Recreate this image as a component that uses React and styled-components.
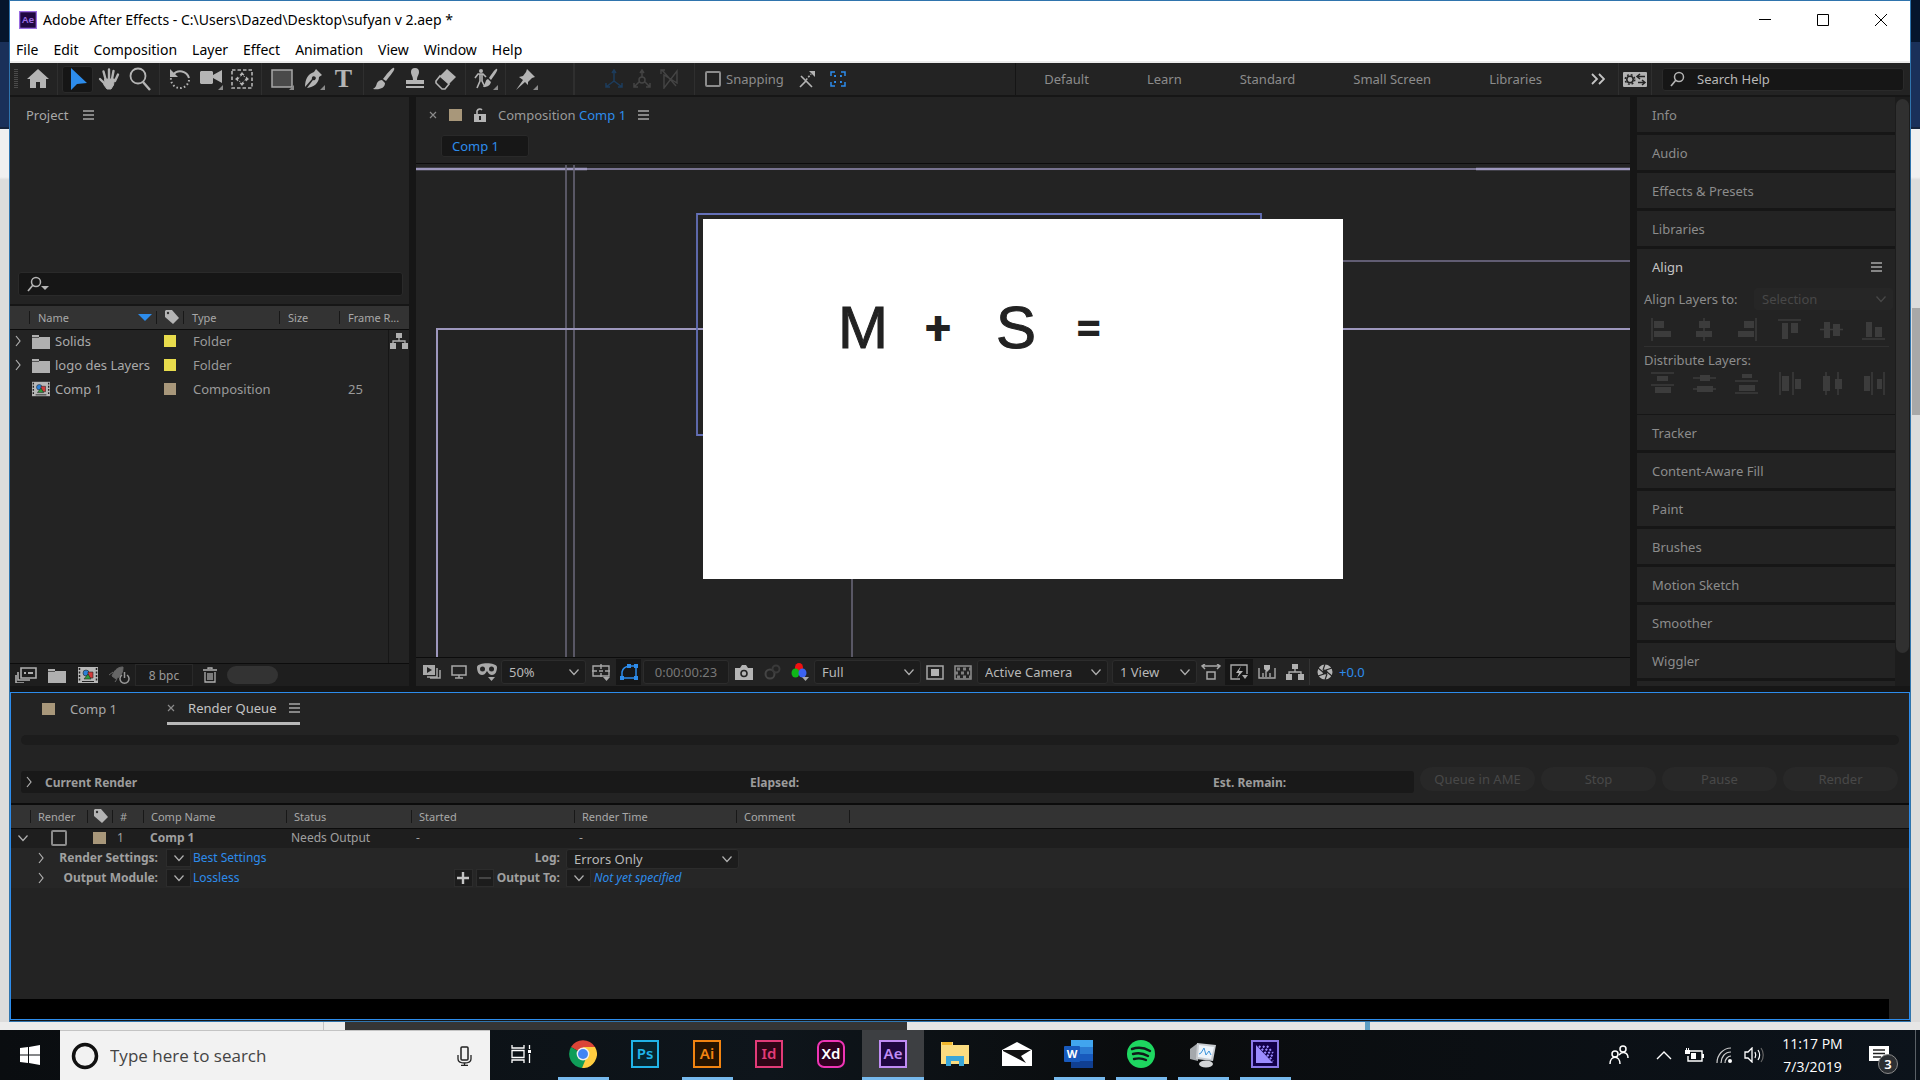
import styled, { createGlobalStyle, css } from 'styled-components';

const BLUE = '#2d8ceb';

const GlobalStyle = createGlobalStyle`
  * {
    box-sizing: border-box;
  }
  body {
    margin: 0;
    background: #e6e6e6;
    font-family: 'Noto Sans', 'Open Sans', sans-serif;
  }
  button,
  input,
  select {
    font: inherit;
    color: inherit;
    margin: 0;
    padding: 0;
    border: none;
    background: none;
  }
  svg {
    display: block;
    flex: none;
  }
`;

/* ---------- icons ---------- */

const Icon = ({ w = 20, h = w, box = `0 0 ${w} ${h}`, children, ...rest }) => (
  <svg width={w} height={h} viewBox={box} fill="none" aria-hidden="true" {...rest}>
    {children}
  </svg>
);

const Corner = () => <path d="M24 18v5h-5z" fill="#8a8a8a" />;

const toolIcons = {
  home: <path d="M12 2 1 12h3v9h6v-6h4v6h6v-9h3z" fill="#b4b4b4" />,
  select: <path d="M5 1v22l6-6 10-1z" fill={BLUE} />,
  hand: (
    <g stroke="#b4b4b4" strokeLinecap="round" strokeWidth="2.4">
      <path d="M8.500 12 6.500 4.500M12 11V2.500M15 12l1.500-8M18 14l3-6.500M8 17l-5-5" />
      <path d="M8 12h9.500l-1 6-2.500 4h-4l-3-4z" fill="#b4b4b4" strokeWidth="1" />
    </g>
  ),
  zoom: (
    <g stroke="#b4b4b4" strokeWidth="1.800">
      <circle cx="10" cy="9" r="7.500" />
      <path d="m15 15 7 8" strokeWidth="2.400" />
    </g>
  ),
  rotate: (
    <g stroke="#b4b4b4" strokeWidth="2">
      <path d="M5 8A9 9 0 0 1 21 11" />
      <path d="M21 13a9 9 0 0 1-18-2" strokeDasharray="1.600 2.200" />
      <path d="M2 2v8h8z" fill="#b4b4b4" stroke="none" />
    </g>
  ),
  camera: (
    <g fill="#b4b4b4">
      <path d="M2 4h11l1 1v3l9-5v13l-9-5v5l-1 1H2l-1-1V5z" />
      <Corner />
    </g>
  ),
  anchor: (
    <g>
      <rect x="2" y="3" width="20" height="18" stroke="#b4b4b4" strokeWidth="1.600" strokeDasharray="3.500 2" />
      <path d="M12 5l2.500 3h-5zM12 19l2.500-3h-5zM5 12l3-2.500v5zM19 12l-3-2.500v5z" fill="#b4b4b4" />
      <circle cx="12" cy="12" r="3.500" stroke="#b4b4b4" strokeWidth="1" strokeDasharray="2 1.500" />
    </g>
  ),
  rect: (
    <g>
      <rect x="2" y="3" width="20" height="17" fill="#4a4a4a" stroke="#a8a8a8" strokeWidth="1.500" />
      <Corner />
    </g>
  ),
  pen: (
    <g>
      <path d="M15 2l6 6-3 2c0 6-5 10-12 11L12 13a2 2 0 1 0-1-1L4 20C4 12 7 7 13 5z" fill="#b4b4b4" />
      <Corner />
    </g>
  ),
  brush: <path d="M22 1c1 1 0 3-8 13l-3-2C18 3 21 0 22 1zM10 13l3 3c0 5-5 7-12 6 3-2 3-3 4-6 1-2 3-3 5-3z" fill="#b4b4b4" />,
  stamp: <path d="M12 1a4 4 0 0 1 4 4c0 3-2 4-2 8h7v4H3v-4h7c0-4-2-5-2-8a4 4 0 0 1 4-4zM3 19h18v2H3z" fill="#b4b4b4" />,
  eraser: (
    <g>
      <path d="m13 2 9 8-7 7-9-8z" fill="#b4b4b4" />
      <path d="m6 9 9 8-4 5H8l-6-6v-2z" stroke="#b4b4b4" strokeWidth="1.600" />
    </g>
  ),
  roto: (
    <g>
      <circle cx="7" cy="4" r="2" fill="#b4b4b4" />
      <path d="M1 11l3-4h5l3 3M6 7v7l-3 7M8 7v7l3 6" stroke="#b4b4b4" strokeWidth="1.600" />
      <path d="M23 2c1 1-1 4-6 11l-2-2C19 5 22 1 23 2zM14 12l3 3c-1 4-4 5-8 5 3-4 2-7 5-8z" fill="#b4b4b4" />
      <Corner />
    </g>
  ),
  pin: (
    <g fill="#b4b4b4">
      <path d="m13 2 8 8-3 1-4 4v3l-3-3-9 8 7-10-4-3 4-1 3-4z" />
      <Corner />
    </g>
  ),
};

const ToolIcon = ({ name }) => (
  <Icon w={24} h={24}>
    {toolIcons[name]}
  </Icon>
);

const Chevron = ({ color = '#b0b0b0', dir = 'down' }) => (
  <Icon w={12} h={12}>
    <path
      d={dir === 'down' ? 'M1.500 3.500 6 8.500l4.500-5' : 'M4 1l4 5-4 5'}
      stroke={color}
      strokeWidth="1.200"
    />
  </Icon>
);

const MenuIcon = () => (
  <Icon w={11} h={10}>
    <path d="M0 1h11M0 5h11M0 9h11" stroke="#a8a8a8" strokeWidth="1.400" />
  </Icon>
);

const CloseIcon = () => (
  <Icon w={8} h={8}>
    <path d="m1 1 6 6M7 1 1 7" stroke="#8a8a8a" strokeWidth="1.200" />
  </Icon>
);

const TagIcon = () => (
  <Icon w={16} h={16}>
    <path d="M1 2 2 1h6l7 8-6 6-8-7z" fill="#b4b4b4" />
    <circle cx="4" cy="4" r="1.200" fill="#333" />
  </Icon>
);

const FolderIcon = () => (
  <Icon w={18} h={15}>
    <path d="M0 1h7v2h11v12H0z" fill="#b0b0b0" />
    <path d="M0 3.500h7" stroke="#555" />
  </Icon>
);

const CompIcon = ({ size = 20 }) => (
  <Icon w={size} h={16} box="0 0 20 16">
    <path d="M0 0h20v16H0z" fill="#b8b8b8" />
    <path d="M1.500 1v14M18.500 1v14" stroke="#222" strokeWidth="1.500" strokeDasharray="2 1.500" />
    <path d="M4 14.500h12" stroke="#222" />
    <circle cx="8" cy="6" r="3" fill="#2c7fd6" stroke="#222" strokeWidth=".6" />
    <path d="M10 5h5v6h-5z" fill="#d23a3a" stroke="#222" strokeWidth=".6" />
    <path d="m10 7 3 5H6z" fill="#2f9b3a" stroke="#222" strokeWidth=".6" />
  </Icon>
);

const FlowIcon = ({ color = '#b0b0b0' }) => (
  <Icon w={18} h={16}>
    <path d="M6 0h6v5H6zM0 10h6v6H0zM12 10h6v6h-6z" fill={color} />
    <path d="M9 5v3M3 10V8h12v2" stroke={color} strokeWidth="1.300" />
  </Icon>
);

const SearchIcon = ({ arrow }) => (
  <Icon w={22} h={16}>
    <circle cx="9" cy="6" r="4.500" stroke="#b4b4b4" strokeWidth="1.500" />
    <path d="m6 9-5 6" stroke="#b4b4b4" strokeWidth="1.700" />
    {arrow && <path d="M14 10h8l-4 4z" fill="#b4b4b4" />}
  </Icon>
);

const AdobeIcon = ({ bg, fg, text, round = 0, size = 28 }) => (
  <Icon w={size} h={size} box="0 0 28 28">
    <rect x="1" y="1" width="26" height="26" rx={round} fill={bg} stroke={fg} strokeWidth="2" />
    <text x="14" y="19" textAnchor="middle" fontSize="15" fontWeight="600" fill={text === 'Xd' ? '#fff' : fg}>
      {text}
    </text>
  </Icon>
);

/* ---------- shared parts ---------- */

const Swatch = styled.span`
  display: block;
  width: ${({ $w }) => $w || 12}px;
  height: 12px;
  background: ${({ $color }) => $color || '#a8977a'};
`;

const Divider = styled.span`
  flex: none;
  width: ${({ $w }) => $w || 1}px;
  margin: 0 4px;
  align-self: stretch;
  background: #2f2f2f;
`;

const SelectWrap = styled.label`
  display: grid;
  align-items: center;
  width: ${({ $width }) => $width}px;
  height: ${({ $height }) => $height || 24}px;
  color: ${({ $color }) => $color || '#b8b8b8'};
  font-size: 13px;
  > select,
  > svg {
    grid-area: 1 / 1;
  }
  > svg {
    justify-self: end;
    margin-right: 6px;
    pointer-events: none;
  }
`;

const SelectBox = styled.select`
  appearance: none;
  width: 100%;
  height: 100%;
  padding-left: 7px;
  border: 1px solid ${({ $flat }) => ($flat ? '#262626' : '#2c2c2c')};
  border-radius: 3px;
  background: ${({ $flat }) => ($flat ? '#262626' : '#1c1c1c')};
  opacity: 1;
`;

const Select = ({ label, value, width, height, color, flat, disabled }) => (
  <SelectWrap $width={width} $height={height} $color={color}>
    <SelectBox $flat={flat} disabled={disabled} aria-label={label} defaultValue={value}>
      <option>{value}</option>
    </SelectBox>
    <Chevron color={color} />
  </SelectWrap>
);

/* ---------- window chrome ---------- */

const Page = styled.div`
  display: flex;
  flex-direction: column;
  min-height: 100vh;
`;

const Desktop = styled.div`
  display: flex;
  flex: 1;
  padding: 0 9px 8px;
  background:
    linear-gradient(90deg, #ececec 323px, #c4c4c4 323px 324px, #ececec 324px 345px, #353535 345px 907px, #e6e6e6 907px 1365px, #5f9fc4 1365px 1370px, #e6e6e6 1370px) bottom / 100% 8px no-repeat,
    linear-gradient(90deg, transparent 99.600%, #a8a8a8 99.600%) 0 308px / 100% 107px no-repeat,
    linear-gradient(#06152c 42px, #1a3059 42px 127px, #16233a 127px 129px, #f0f0f0 129px 177px, #dcdcdc 180px);
`;

const Window = styled.main`
  display: flex;
  flex-direction: column;
  flex: 1;
  min-width: 0;
  padding-bottom: 1px;
  border: 1px solid #2f74ad;
  background: #161616;
`;

const TitleBar = styled.header`
  display: flex;
  align-items: center;
  height: 37px;
  padding-left: 9px;
  gap: 6px;
  background: #fff;
  color: #000;
`;

const Title = styled.h1`
  flex: 1;
  margin: 0;
  font-size: 14px;
  font-weight: 400;
`;

const WindowButtons = styled.div`
  display: flex;
`;

const WindowButton = styled.button`
  display: grid;
  place-items: center;
  width: 58px;
  height: 36px;
`;

const MenuBar = styled.nav`
  display: flex;
  align-items: center;
  gap: 15px;
  height: 25px;
  padding: 0 6px;
  border-bottom: 2px solid #ececec;
  background: #fff;
  color: #000;
  font-size: 14px;
`;

/* ---------- toolbar ---------- */

const ToolBar = styled.div`
  display: flex;
  align-items: center;
  height: 32px;
  padding: 0 6px 0 4px;
  background: #232323;
  color: #8c8c8c;
  font-size: 13px;
`;

const ToolGroup = styled.div`
  display: flex;
  align-items: center;
  align-self: stretch;
  & + & {
    margin-left: 4px;
    padding-left: 4px;
    border-left: 1px solid #2f2f2f;
  }
`;

const Grip = styled.span`
  width: 4px;
  height: 20px;
  margin-right: 4px;
  background: repeating-linear-gradient(#4a4a4a 0 1px, transparent 1px 2px);
`;

const Tool = styled.button`
  display: grid;
  place-items: center;
  width: ${({ $w }) => $w || 31}px;
  height: 27px;
  ${({ $active }) =>
    $active &&
    css`
      border: 1px solid #2a2a2a;
      border-radius: 3px;
      background: #161616;
    `}
`;

const TypeTool = styled(Tool)`
  color: #b4b4b4;
  font-family: 'Liberation Serif', serif;
  font-size: 26px;
  font-weight: 700;
  line-height: 24px;
`;

const AxisGroup = styled.div`
  display: flex;
  align-items: center;
  align-self: stretch;
  margin-left: 28px;
`;

const AxisTools = styled.div`
  display: flex;
  margin: 0 6px 0 21px;
`;

const Snapping = styled.label`
  display: flex;
  align-items: center;
  gap: 5px;
  margin: 0 8px 0 6px;
`;

const Check = styled.input`
  appearance: none;
  display: block;
  width: 16px;
  height: 16px;
  border: 2px solid #8c8c8c;
  border-radius: 2px;
`;

const Workspaces = styled.nav`
  display: flex;
  align-items: center;
  align-self: stretch;
  gap: 49px;
  margin-left: auto;
  padding: 0 9px 0 28px;
  border-left: 1px solid #151515;
`;

const WorkspaceTabs = styled.div`
  display: flex;
  gap: 58px;
`;

const HelpSearch = styled.label`
  display: flex;
  align-items: center;
  gap: 5px;
  width: 242px;
  height: 23px;
  margin-left: 6px;
  padding-left: 7px;
  border: 1px solid #2a2a2a;
  border-radius: 3px;
  background: #161616;
`;

const TextInput = styled.input`
  min-width: 0;
  flex: 1;
  outline: none;
  &::placeholder {
    color: #b8b8b8;
    opacity: 1;
  }
`;

/* ---------- workspace ---------- */

const Workspace = styled.div`
  display: grid;
  grid-template-columns: 399px minmax(0, 1fr) 273px;
  column-gap: 7px;
  flex: 589 1 0;
  min-height: 0;
  padding: 2px 0 6px;
`;

const Panel = styled.section`
  display: flex;
  flex-direction: column;
  min-width: 0;
  background: #232323;
  color: #9a9a9a;
  font-size: 13px;
`;

const PanelTitle = styled.div`
  display: flex;
  align-items: center;
  gap: 15px;
  height: 36px;
  padding-left: 16px;
  color: #a8a8a8;
`;

const Preview = styled.div`
  height: 139px;
`;

const ProjectSearch = styled.label`
  display: flex;
  align-items: center;
  height: 24px;
  margin: 0 6px 8px 8px;
  padding-left: 8px;
  border: 1px solid #2a2a2a;
  border-radius: 3px;
  background: #161616;
`;

const AssetArea = styled.div`
  flex: 1;
  border-top: 2px solid #161616;
  background: linear-gradient(#161616, #161616) 378px 0 / 1px 100% no-repeat;
`;

const AssetTable = styled.table`
  width: 100%;
  table-layout: fixed;
  border-collapse: collapse;
`;

const Th = styled.th`
  height: 23px;
  padding: 0 0 0 ${({ $pad }) => ($pad === undefined ? 8 : $pad)}px;
  border-bottom: 1px solid #0c0c0c;
  background: ${({ $last }) =>
    $last ? '#333' : 'linear-gradient(#181818, #181818) right center / 1px 13px no-repeat #333'};
  color: #a8a8a8;
  font-size: 11px;
  font-weight: 400;
  text-align: left;
  white-space: nowrap;
`;

const HeadCell = styled.span`
  display: flex;
  align-items: center;
  justify-content: space-between;
  padding-right: 5px;
`;

const Td = styled.td`
  height: 24px;
  padding: 0 0 0 ${({ $pad }) => $pad || 0}px;
  white-space: nowrap;
  font-size: 13px;
  line-height: 20px;
`;

const AssetName = styled.span`
  display: flex;
  align-items: center;
  gap: 5px;
  color: #aaa;
`;

const ProjectFooter = styled.footer`
  display: flex;
  align-items: center;
  height: 23px;
  border-top: 1px solid #0c0c0c;
  background: #1e1e1e;
`;

const FootButton = styled.button`
  display: grid;
  place-items: center;
  width: 31px;
  height: 22px;
`;

const DepthButton = styled.button`
  width: 58px;
  height: 22px;
  margin: 0 1px;
  border: 1px solid #292929;
  background: #1c1c1c;
  font-size: 12px;
`;

const ScrollThumb = styled.span`
  width: 51px;
  height: 18px;
  margin-left: 2px;
  border-radius: 9px;
  background: #333;
`;

/* ---------- composition ---------- */

const CompHeader = styled.div`
  display: flex;
  align-items: center;
  height: 36px;
  padding-left: 13px;
  gap: 12px;
  > p {
    margin: 0;
  }
  b {
    color: ${BLUE};
    font-weight: 400;
  }
`;

const CompTabs = styled.div`
  height: 31px;
  padding: 2px 0 0 25px;
  border-bottom: 1px solid #0c0c0c;
`;

const CompTab = styled.button`
  width: 88px;
  height: 22px;
  padding-left: 10px;
  border: 1px solid #292929;
  border-radius: 3px;
  background: #171717;
  color: ${BLUE};
  text-align: left;
`;

const Viewer = styled.div`
  display: flex;
  justify-content: center;
  flex: 1;
  overflow: hidden;
  padding-top: 55px;
  border-bottom: 1px solid #0c0c0c;
`;

const Stage = styled.div`
  position: relative;
  flex: none;
  width: 640px;
  height: 360px;
`;

const Guides = styled.svg`
  position: absolute;
  inset: 0;
  overflow: visible;
`;

const Canvas = styled.div`
  position: relative;
  display: flex;
  align-items: center;
  height: 100%;
  padding: 0 0 142px 135px;
  background: #fff;
  color: #222;
  font-size: 60px;
  line-height: 60px;
`;

const Letter = styled.span`
  width: ${({ $w }) => $w}px;
  font-family: 'Liberation Sans', sans-serif;
  -webkit-text-stroke: 1px #222;
`;

const Sign = styled.span`
  width: ${({ $w }) => $w}px;
  font-family: Roboto, sans-serif;
  font-size: 48px;
  font-weight: 700;
`;

const ViewBar = styled.footer`
  display: flex;
  align-items: center;
  height: 28px;
  padding-left: 2px;
`;

const ViewTool = styled.button`
  display: grid;
  place-items: center;
  width: ${({ $w }) => $w || 28}px;
  height: 26px;
  border-left: ${({ $line }) => ($line ? '1px solid #333' : 'none')};
  background: ${({ $dark }) => ($dark ? '#161616' : 'none')};
`;

const TimeBox = styled.button`
  width: 86px;
  height: 24px;
  margin: 0 1px 0 2px;
  border: 1px solid #2c2c2c;
  border-radius: 3px;
  background: #1c1c1c;
  color: #777;
`;

const ViewGap = styled.span`
  width: 4px;
`;

const Exposure = styled.button`
  color: ${BLUE};
`;

/* ---------- side panels ---------- */

const SideColumn = styled.aside`
  display: flex;
  justify-content: space-between;
  background: #1c1c1c;
  overflow: hidden;
`;

const SideList = styled.div`
  flex: 1;
  background: #232323;
  color: #8c8c8c;
  font-size: 13px;
`;

const SideItem = styled.button`
  display: block;
  width: 100%;
  height: 38px;
  padding: 0 15px;
  border-bottom: 3px solid #161616;
  text-align: left;
`;

const SideScroll = styled.div`
  width: 15px;
  padding: 2px 0 33px 1px;
  > span {
    display: block;
    height: 100%;
    width: 13px;
    border-radius: 7px;
    background: #303030;
  }
`;

const AlignPanel = styled.section`
  height: 166px;
  border-bottom: 1px solid #161616;
`;

const AlignTitle = styled.h2`
  display: flex;
  align-items: center;
  justify-content: space-between;
  height: 36px;
  margin: 0;
  padding: 0 13px 0 15px;
  color: #c4c4c4;
  font-size: 13px;
  font-weight: 400;
`;

const AlignTarget = styled.div`
  display: flex;
  align-items: center;
  justify-content: space-between;
  height: 27px;
  padding: 0 2px 0 7px;
`;

const AlignRow = styled.div`
  display: grid;
  grid-template-columns: repeat(6, 1fr);
  place-items: center;
  height: 34px;
  margin: 0 0 0 4px;
`;

const AlignLabel = styled.div`
  height: 20px;
  margin: 0 6px 0 7px;
  border-top: 1px solid #303030;
  line-height: 26px;
`;

/* ---------- render queue ---------- */

const Queue = styled.section`
  display: flex;
  flex-direction: column;
  flex: 326 1 0;
  border: 1px solid ${BLUE};
  background: #232323;
  color: #a8a8a8;
  font-size: 13px;
`;

const QueueTabs = styled.div`
  display: flex;
  align-items: center;
  height: 32px;
  padding-left: 31px;
  gap: 15px;
`;

const QueueTab = styled.button`
  display: flex;
  align-items: center;
  gap: 13px;
  height: 31px;
  margin-left: 35px;
  border-bottom: 3px solid #b8b8b8;
  color: #c4c4c4;
`;

const Progress = styled.div`
  height: 10px;
  margin: 10px 10px 22px;
  border-radius: 5px;
  background: #1c1c1c;
`;

const RenderStatus = styled.div`
  display: flex;
  align-items: flex-start;
  gap: 6px;
  padding: 0 11px 0 10px;
`;

const StatusBar = styled.div`
  display: grid;
  grid-template-columns: 22px 705px 463px 1fr;
  align-items: center;
  flex: 1;
  height: 22px;
  margin-top: 4px;
  padding-left: 2px;
  border-radius: 3px;
  background: #191919;
  color: #9c9c9c;
  font-size: 12px;
  font-weight: 700;
`;

const PillButton = styled.button`
  width: 115px;
  height: 24px;
  border-radius: 12px;
  background: #282828;
  color: #484848;
`;

const QueueList = styled.div`
  flex: 1;
  margin-top: 10px;
  border-top: 2px solid #0c0c0c;
`;

const QueueTable = styled.table`
  width: 100%;
  table-layout: fixed;
  border-collapse: collapse;
`;

const QueueTd = styled(Td)`
  height: 20px;
  padding-left: ${({ $pad }) => $pad || 4}px;
  background: ${({ $alt }) => ($alt ? '#262626' : '#1e1e1e')};
  color: #a0a0a0;
  font-size: 12px;
  font-weight: ${({ $bold }) => ($bold ? 700 : 400)};
  line-height: 18px;
`;

const Detail = styled.div`
  display: grid;
  grid-template-columns: 34px 112px 34px 256px 112px 1fr;
  align-items: center;
  height: 19px;
`;

const DetailCell = styled.span`
  display: flex;
  align-items: center;
  justify-content: ${({ $end }) => ($end ? 'flex-end' : 'flex-start')};
  gap: 3px;
  padding-left: ${({ $pad }) => $pad || 0}px;
  font-weight: ${({ $bold }) => ($bold ? 700 : 400)};
`;

const MiniButton = styled.button`
  display: grid;
  place-items: center;
  width: ${({ $w }) => $w || 25}px;
  height: 18px;
  border: 1px solid #2c2c2c;
  background: #1c1c1c;
`;

const Link = styled.a`
  color: ${BLUE};
  text-decoration: none;
  font-size: 12px;
  font-style: ${({ $italic }) => ($italic ? 'italic' : 'normal')};
`;

const QueueFooter = styled.div`
  height: 20px;
  margin-right: 20px;
  background: #000;
`;

/* ---------- taskbar ---------- */

const Taskbar = styled.footer`
  display: flex;
  align-items: stretch;
  height: 50px;
  background: linear-gradient(90deg, #0a0d10, #0e151b 40%, #0a0c0d 60%, #0c131b);
  color: #fff;
`;

const Start = styled.button`
  display: grid;
  place-items: center;
  width: 60px;
`;

const TaskSearch = styled.label`
  display: flex;
  align-items: center;
  width: 430px;
  padding: 0 18px 0 11px;
  gap: 11px;
  border-top: 1px solid #c4c4c4;
  background: #f2f2f2;
  color: #3a3a3a;
  > input {
    font-family: 'Open Sans', sans-serif;
    font-size: 17px;
  }
  > input::placeholder {
    color: #444;
  }
`;

const TaskButton = styled.button`
  display: grid;
  place-items: center;
  width: 62px;
  background: ${({ $active }) => ($active ? '#3d3f42' : 'none')};
  box-shadow: ${({ $active }) => ($active ? 'inset 0 -3px #76b9ed' : 'none')};
  padding-bottom: 3px;
  ${({ $open }) =>
    $open &&
    css`
      background: linear-gradient(#76b9ed, #76b9ed) center bottom / 51px 3px no-repeat;
    `}
`;

const Tray = styled.div`
  display: flex;
  align-items: center;
  margin-left: auto;
`;

const TrayButton = styled.button`
  display: grid;
  place-items: center;
  width: ${({ $w }) => $w || 30}px;
  height: 50px;
`;

const Clock = styled.button`
  width: 87px;
  font-family: 'Open Sans', sans-serif;
  font-size: 14px;
  line-height: 23px;
`;

const Notify = styled(TrayButton)`
  position: relative;
  width: 46px;
  margin-right: 13px;
`;

const Badge = styled.span`
  position: absolute;
  right: 4px;
  bottom: 6px;
  width: 20px;
  height: 20px;
  border: 1px solid #8a8a8a;
  border-radius: 50%;
  background: #2c2f33;
  font-size: 13px;
  font-weight: 600;
  line-height: 18px;
`;

const ShowDesktop = styled.button`
  width: 5px;
  border-left: 1px solid #5a6066;
`;

/* ---------- data ---------- */

const menus = ['File', 'Edit', 'Composition', 'Layer', 'Effect', 'Animation', 'View', 'Window', 'Help'];
const toolGroups = [
  ['home'],
  ['select', 'hand', 'zoom'],
  ['rotate', 'camera', 'anchor'],
  ['rect', 'pen', 'type'],
  ['brush', 'stamp', 'eraser'],
  ['roto'],
  ['pin'],
];
const workspaces = ['Default', 'Learn', 'Standard', 'Small Screen', 'Libraries'];
const assets = [
  { name: 'Solids', type: 'Folder', color: '#e8dc4c' },
  { name: 'logo des Layers', type: 'Folder', color: '#e8dc4c' },
  { name: 'Comp 1', type: 'Composition', color: '#a8977a', rate: 25 },
];
const topPanels = ['Info', 'Audio', 'Effects & Presets', 'Libraries'];
const bottomPanels = ['Tracker', 'Content-Aware Fill', 'Paint', 'Brushes', 'Motion Sketch', 'Smoother', 'Wiggler'];

const alignIcons = [
  ['Align left', 'M1 0v23', 'M3 3h10v7H3zM3 13h17v6H3z'],
  ['Align horizontal centers', 'M11 0v23', 'M6 3h11v7H6zM3 13h16v6H3z'],
  ['Align right', 'M21 0v23', 'M9 3h10v7H9zM3 13h16v6H3z'],
  ['Align top', 'M0 2h23', 'M4 5h6v16H4zM13 5h7v10h-7z'],
  ['Align vertical centers', 'M0 11.500h23', 'M4 4h6v16H4zM13 6h7v12h-7z'],
  ['Align bottom', 'M0 21h23', 'M4 4h6v15H4zM13 9h7v10h-7z'],
];
const distributeIcons = [
  ['Distribute tops', 'M0 1h23M0 13h23', 'M6 4h11v5H6zM4 15h16v6H4z'],
  ['Distribute vertical centers', 'M0 6h23M0 17h23', 'M7 3h10v6H7zM4 14h16v6H4z'],
  ['Distribute bottoms', 'M0 9h23M0 21h23', 'M7 2h10v4H7zM4 13h16v6H4z'],
  ['Distribute lefts', 'M2 0v23M15 0v23', 'M4 4h7v15H4zM17 7h6v10h-6z'],
  ['Distribute horizontal centers', 'M6 0v23M18 0v23', 'M3 4h7v15H3zM15 7h7v10h-7z'],
  ['Distribute rights', 'M10 0v23M22 0v23', 'M2 4h6v15H2zM15 7h5v10h-5z'],
];

/* ---------- sections ---------- */

const TopBars = () => (
  <>
    <TitleBar>
      <AdobeIcon bg="#1f0740" fg="#9a6ce0" text="Ae" size={18} />
      <Title>Adobe After Effects - C:\Users\Dazed\Desktop\sufyan v 2.aep *</Title>
      <WindowButtons>
        <WindowButton aria-label="Minimize">
          <Icon w={12}>
            <path d="M0 5.500h12" stroke="#000" />
          </Icon>
        </WindowButton>
        <WindowButton aria-label="Maximize">
          <Icon w={12}>
            <path d="M.5.5h11v11H.5z" stroke="#000" />
          </Icon>
        </WindowButton>
        <WindowButton aria-label="Close">
          <Icon w={12}>
            <path d="m0 0 12 12M12 0 0 12" stroke="#000" />
          </Icon>
        </WindowButton>
      </WindowButtons>
    </TitleBar>
    <MenuBar>
      {menus.map((m) => (
        <button key={m}>{m}</button>
      ))}
    </MenuBar>
  </>
);

const Tools = () => (
  <ToolBar>
    <Grip />
    {toolGroups.map((group) => (
      <ToolGroup key={group[0]}>
        {group.map((name) =>
          name === 'type' ? (
            <TypeTool key={name}>T</TypeTool>
          ) : (
            <Tool key={name} aria-label={name} $active={name === 'select'}>
              <ToolIcon name={name} />
            </Tool>
          )
        )}
      </ToolGroup>
    ))}
    <AxisGroup>
      <Divider $w={2} />
      <AxisTools>
        <Tool $w={28} aria-label="Local axis">
          <Icon w={20}>
            <path d="M10 12V3M10 12l-8 6M10 12l8 6M8 4l2-3 2 3M2 14v4h4M18 14v4h-4" stroke="#1d3c5c" strokeWidth="1.500" />
          </Icon>
        </Tool>
        <Tool $w={28} aria-label="World axis">
          <Icon w={20}>
            <path d="M10 8V3M7 13l-5 5M13 13l5 5M8 4l2-3 2 3M2 14v4h4M18 14v4h-4" stroke="#444" strokeWidth="1.500" />
            <circle cx="10" cy="11" r="3" stroke="#444" strokeWidth="1.500" />
          </Icon>
        </Tool>
        <Tool $w={28} aria-label="View axis">
          <Icon w={20}>
            <path d="M4 6v13L17 2v12zM2 1l14 16M1 5V1h4" stroke="#444" strokeWidth="1.400" />
          </Icon>
        </Tool>
      </AxisTools>
      <Divider />
      <Snapping>
        <Check type="checkbox" />
        Snapping
      </Snapping>
      <Tool aria-label="Snap edges">
        <Icon w={18}>
          <path d="m2 17 6-6 6 6M3 6l5 5" stroke="#b4b4b4" strokeWidth="1.600" strokeDasharray="18 2" />
          <path d="m8 10 5-6" stroke="#b4b4b4" strokeWidth="1.600" strokeDasharray="2 1.500" />
          <path d="M11 1h6v6z" fill="#b4b4b4" />
        </Icon>
      </Tool>
      <Tool aria-label="Snap features">
        <Icon w={16}>
          <path d="M1 5V1h4M11 1h4v4M15 11v4h-4M5 15H1v-4" stroke={BLUE} strokeWidth="1.500" />
          <path d="M5 6V5h1M10 5h1v1M11 10v1h-1M6 11H5v-1" stroke={BLUE} strokeWidth="1.800" />
        </Icon>
      </Tool>
    </AxisGroup>
    <Workspaces>
      <WorkspaceTabs>
        {workspaces.map((w) => (
          <button key={w}>{w}</button>
        ))}
      </WorkspaceTabs>
      <button aria-label="More workspaces">
        <Icon w={14} h={12}>
          <path d="m1 1 5 5-5 5M8 1l5 5-5 5" stroke="#c4c4c4" strokeWidth="1.800" />
        </Icon>
      </button>
    </Workspaces>
    <Divider />
    <button aria-label="Workspace settings">
      <Icon w={24} h={15}>
        <rect width="24" height="15" rx="1" fill="#b4b4b4" />
        <circle cx="7" cy="7.500" r="3.200" stroke="#232323" strokeWidth="1.600" />
        <circle cx="7" cy="7.500" r="4.800" stroke="#232323" strokeWidth="1.400" strokeDasharray="1.900 1.900" />
        <path d="M14 4.500h8M17 2l-3 2.500L17 7M22 10.500h-7M19 8l3 2.500-3 2.500" stroke="#232323" strokeWidth="1.500" />
      </Icon>
    </button>
    <Divider />
    <HelpSearch>
      <SearchIcon />
      <TextInput placeholder="Search Help" aria-label="Search Help" />
    </HelpSearch>
  </ToolBar>
);

const Project = () => (
  <Panel>
    <PanelTitle>
      Project <MenuIcon />
    </PanelTitle>
    <Preview />
    <ProjectSearch>
      <SearchIcon arrow />
      <TextInput aria-label="Search project" />
    </ProjectSearch>
    <AssetArea>
      <AssetTable>
        <colgroup>
          {[20, 127, 27, 96, 60, 49, 20].map((w, i) => (
            <col key={i} width={w} />
          ))}
        </colgroup>
        <thead>
          <tr>
            <Th />
            <Th>
              <HeadCell>
                Name
                <Icon w={14} h={7}>
                  <path d="M0 0h14L7 7z" fill={BLUE} />
                </Icon>
              </HeadCell>
            </Th>
            <Th $pad={7}>
              <TagIcon />
            </Th>
            <Th>Type</Th>
            <Th>Size</Th>
            <Th colSpan={2} $last>
              Frame R...
            </Th>
          </tr>
        </thead>
        <tbody>
          {assets.map((a, i) => (
            <tr key={a.name}>
              <Td $pad={2}>{a.type === 'Folder' && <Chevron dir="right" />}</Td>
              <Td $pad={2}>
                <AssetName>
                  {a.type === 'Folder' ? <FolderIcon /> : <CompIcon size={18} />}
                  {a.name}
                </AssetName>
              </Td>
              <Td $pad={7}>
                <Swatch $color={a.color} />
              </Td>
              <Td $pad={9}>{a.type}</Td>
              <Td />
              <Td $pad={8}>{a.rate}</Td>
              <Td $pad={1}>{i === 0 && <FlowIcon />}</Td>
            </tr>
          ))}
        </tbody>
      </AssetTable>
    </AssetArea>
    <ProjectFooter>
      <FootButton aria-label="Interpret footage">
        <Icon w={22} h={16}>
          <path d="M6 1h15v10H6zM3 5v8h12M1 8v8h8" stroke="#b0b0b0" strokeWidth="1.600" />
          <path d="M9 6h2M13 6h5" stroke="#b0b0b0" strokeWidth="2" />
        </Icon>
      </FootButton>
      <FootButton aria-label="New folder">
        <FolderIcon />
      </FootButton>
      <FootButton aria-label="New composition">
        <CompIcon size={22} />
      </FootButton>
      <FootButton aria-label="GPU acceleration">
        <Icon w={22} h={18}>
          <path d="M15 1c-6 0-9 4-11 9l4 3c5-3 7-6 7-12zM1 9l4-3M7 16l2-3" fill="#666" stroke="#666" />
          <path d="M14 9a4.500 4.500 0 1 0 5 0M16.500 6v6" stroke="#999" strokeWidth="1.500" />
        </Icon>
      </FootButton>
      <DepthButton>8 bpc</DepthButton>
      <FootButton aria-label="Delete">
        <Icon w={14} h={16}>
          <path d="M0 3h14M5 2V1h4v1M2 5v10h10V5M5 6v7M7 6v7M9 6v7" stroke="#b0b0b0" strokeWidth="1.300" />
        </Icon>
      </FootButton>
      <ScrollThumb />
    </ProjectFooter>
  </Panel>
);

const Composition = () => (
  <Panel>
    <CompHeader>
      <CloseIcon />
      <Swatch $w={13} />
      <Icon w={12} h={14}>
        <path d="M3 7V3a3 3 0 0 1 5-1" stroke="#b4b4b4" strokeWidth="1.600" />
        <path d="M0 6h12v8H0z" fill="#b4b4b4" />
        <path d="M6 8v4" stroke="#222" strokeWidth="2" />
      </Icon>
      <p>
        Composition <b>Comp 1</b>
      </p>
      <MenuIcon />
    </CompHeader>
    <CompTabs>
      <CompTab>Comp 1</CompTab>
    </CompTabs>
    <Viewer>
      <Stage>
        <Guides width="640" height="360">
          <g fill="none" stroke="#9d97bd">
            <path d="M-287-50H-116M773-50H928" strokeWidth="2.500" />
            <path d="M-116-50H773" stroke="#77728f" strokeWidth="2" />
            <path d="M-137-54v500M-129-54v500" stroke="#6c6a7c" strokeWidth="1.500" />
            <path d="M-266 438V110H928" strokeWidth="2" />
            <path d="M640 42h288" stroke="#77728f" strokeWidth="1.500" />
            <path d="M149 360v78" stroke="#6c6a7c" strokeWidth="1.500" />
            <path d="M0 216h-6V-5h564v5" stroke="#6470b8" strokeWidth="1.800" />
          </g>
        </Guides>
        <Canvas>
          <Letter $w={87}>M</Letter>
          <Sign $w={71}>+</Sign>
          <Letter $w={79}>S</Letter>
          <Sign>=</Sign>
        </Canvas>
      </Stage>
    </Viewer>
    <ViewBar>
      <ViewTool $w={27} aria-label="Always preview">
        <Icon w={18} h={14}>
          <path d="M0 0h12v10H0z" fill="#a8a8a8" />
          <path d="m4 2 5 3-5 3z" fill="#232323" />
          <path d="M14 3v9H4M17 5v8H7" stroke="#a8a8a8" strokeWidth="1.500" />
        </Icon>
      </ViewTool>
      <ViewTool $w={27} aria-label="Primary viewer">
        <Icon w={16} h={14}>
          <path d="M1 1h14v9H1zM8 10v3M4 13h8" stroke="#a8a8a8" strokeWidth="1.500" />
        </Icon>
      </ViewTool>
      <ViewTool $w={29} aria-label="3D glasses">
        <Icon w={20} h={18}>
          <path d="M0 4C1-1 19-1 20 4c0 5-2 8-5 8-2 0-3-1-5-4-2 3-3 4-5 4-3 0-5-3-5-8z" fill="#a8a8a8" />
          <circle cx="5.500" cy="6" r="2.500" fill="#232323" />
          <circle cx="14.500" cy="6" r="2.500" fill="#232323" />
          <path d="M11 14h7l-3.500 4z" fill="#a8a8a8" />
        </Icon>
      </ViewTool>
      <Select label="Magnification" value="50%" width={85} />
      <ViewTool $w={30} aria-label="Grid and guides">
        <Icon w={18} h={17}>
          <path d="M1 2h16v10H1zM9 0v5M9 9v4M0 7h5M13 7h5M7 7h4" stroke="#a8a8a8" strokeWidth="1.400" />
          <path d="M11 13h7l-3.500 4z" fill="#a8a8a8" />
        </Icon>
      </ViewTool>
      <ViewTool $w={25} $dark aria-label="Mask visibility">
        <Icon w={18} h={16}>
          <path d="M2 14V8c1-4 3-5 7-6h7v12z" stroke={BLUE} strokeWidth="1.500" />
          <path d="M0 12h4v4H0zM14 12h4v4h-4zM14 0h4v4h-4zM7 0h4v4H7z" fill={BLUE} />
        </Icon>
      </ViewTool>
      <TimeBox>0:00:00:23</TimeBox>
      <ViewTool aria-label="Snapshot">
        <Icon w={18} h={15}>
          <path d="M0 3h5l2-3h4l2 3h5v12H0z" fill="#b4b4b4" />
          <circle cx="9" cy="8.500" r="3" stroke="#232323" strokeWidth="1.600" />
        </Icon>
      </ViewTool>
      <ViewTool aria-label="Show snapshot">
        <Icon w={18} h={16}>
          <circle cx="7" cy="10" r="4.500" stroke="#444" strokeWidth="2" />
          <circle cx="13" cy="5" r="3.500" stroke="#3a3a3a" strokeWidth="2" />
        </Icon>
      </ViewTool>
      <ViewTool aria-label="Channels">
        <Icon w={18} h={18}>
          <ellipse cx="8" cy="4.500" rx="4" ry="4.500" fill="#f01010" />
          <ellipse cx="4.500" cy="10" rx="4" ry="4.500" fill="#10b818" />
          <ellipse cx="11.500" cy="10" rx="4" ry="4.500" fill="#3b62f0" />
          <path d="M11 14h7l-3.500 4z" fill="#a8a8a8" />
        </Icon>
      </ViewTool>
      <Select label="Resolution" value="Full" width={107} />
      <ViewTool aria-label="Region of interest">
        <Icon w={18} h={15}>
          <path d="M1 1h16v13H1z" stroke="#a8a8a8" strokeWidth="1.500" />
          <path d="M5 4h8v7H5z" fill="#b4b4b4" />
        </Icon>
      </ViewTool>
      <ViewTool aria-label="Transparency grid">
        <Icon w={18} h={15}>
          <path d="M1 1h16v13H1z" stroke="#909090" strokeWidth="1.500" />
          <path d="M3 4h14M1 8h14M3 12h14" stroke="#808080" strokeWidth="3" strokeDasharray="3 3" />
        </Icon>
      </ViewTool>
      <Select label="3D view" value="Active Camera" width={131} />
      <ViewGap />
      <Select label="View layout" value="1 View" width={85} />
      <ViewTool aria-label="Pixel aspect">
        <Icon w={20} h={16}>
          <path d="M1 2h18M4 0 1 2l3 3M16 0l3 2-3 3M6 8h8v7H6z" stroke="#a8a8a8" strokeWidth="1.500" />
        </Icon>
      </ViewTool>
      <ViewTool $dark aria-label="Fast previews">
        <Icon w={18} h={16}>
          <path d="M10 15H1V1h16v9" stroke="#a8a8a8" strokeWidth="1.400" />
          <path d="M11 2 6 9h3l-2 5 6-7H9z" fill="#b4b4b4" />
          <path d="M12 11h6l-3 4z" fill="#a8a8a8" />
        </Icon>
      </ViewTool>
      <ViewTool aria-label="Timeline">
        <Icon w={18} h={14}>
          <path d="M1 3v10h16V3M5 8v4M8 6v6M12 8v4" stroke="#a8a8a8" strokeWidth="1.400" />
          <path d="M6 0h6v4L9 7 6 4z" fill="#b4b4b4" />
        </Icon>
      </ViewTool>
      <ViewTool aria-label="Flowchart">
        <FlowIcon />
      </ViewTool>
      <ViewTool $w={30} $line aria-label="Reset exposure">
        <Icon w={16}>
          <circle cx="8" cy="8" r="5" stroke="#b4b4b4" strokeWidth="5" />
          <path d="M8 0 6 6M15 4l-6 2M15 12l-5-4M8 16l2-6M1 12l6-2M1 4l5 4" stroke="#232323" strokeWidth="1.200" />
        </Icon>
      </ViewTool>
      <Exposure>+0.0</Exposure>
    </ViewBar>
  </Panel>
);

const AlignButtons = ({ icons }) => (
  <AlignRow>
    {icons.map(([label, lines, bars]) => (
      <button key={label} aria-label={label} disabled>
        <Icon w={23}>
          <path d={lines} stroke="#3c3c3c" strokeWidth="1.500" />
          <path d={bars} fill="#3c3c3c" />
        </Icon>
      </button>
    ))}
  </AlignRow>
);

const SidePanels = () => (
  <SideColumn>
    <SideList>
      {topPanels.map((p) => (
        <SideItem key={p}>{p}</SideItem>
      ))}
      <AlignPanel>
        <AlignTitle>
          Align <MenuIcon />
        </AlignTitle>
        <AlignTarget>
          Align Layers to:
          <Select label="Align layers to" value="Selection" width={139} height={22} color="#484848" flat disabled />
        </AlignTarget>
        <AlignButtons icons={alignIcons} />
        <AlignLabel>Distribute Layers:</AlignLabel>
        <AlignButtons icons={distributeIcons} />
      </AlignPanel>
      {bottomPanels.map((p) => (
        <SideItem key={p}>{p}</SideItem>
      ))}
    </SideList>
    <SideScroll>
      <span />
    </SideScroll>
  </SideColumn>
);

const RenderQueue = () => (
  <Queue>
    <QueueTabs>
      <Swatch $w={13} />
      <button>Comp 1</button>
      <QueueTab>
        <CloseIcon />
        Render Queue
        <MenuIcon />
      </QueueTab>
    </QueueTabs>
    <Progress />
    <RenderStatus>
      <StatusBar>
        <Chevron dir="right" />
        <span>Current Render</span>
        <span>Elapsed:</span>
        <span>Est. Remain:</span>
      </StatusBar>
      {['Queue in AME', 'Stop', 'Pause', 'Render'].map((b) => (
        <PillButton key={b} disabled>
          {b}
        </PillButton>
      ))}
    </RenderStatus>
    <QueueList>
      <QueueTable>
        <colgroup>
          {[20, 57, 25, 31, 143, 125, 163, 162, 113].map((w, i) => (
            <col key={i} width={w} />
          ))}
          <col />
        </colgroup>
        <thead>
          <tr>
            <Th />
            <Th $pad={7}>Render</Th>
            <Th $pad={5}>
              <TagIcon />
            </Th>
            <Th $pad={7}>#</Th>
            <Th $pad={7}>Comp Name</Th>
            <Th $pad={7}>Status</Th>
            <Th $pad={7}>Started</Th>
            <Th $pad={7}>Render Time</Th>
            <Th $pad={7}>Comment</Th>
            <Th $last />
          </tr>
        </thead>
        <tbody>
          <tr>
            <QueueTd $pad={6}>
              <Chevron />
            </QueueTd>
            <QueueTd $pad={20}>
              <Check type="checkbox" aria-label="Render Comp 1" />
            </QueueTd>
            <QueueTd $pad={5}>
              <Swatch $w={13} />
            </QueueTd>
            <QueueTd>1</QueueTd>
            <QueueTd $pad={6} $bold>
              Comp 1
            </QueueTd>
            <QueueTd>Needs Output</QueueTd>
            <QueueTd>-</QueueTd>
            <QueueTd>-</QueueTd>
            <QueueTd colSpan={2} />
          </tr>
          <tr>
            <QueueTd colSpan={10} $pad={1} $alt>
              <Detail>
                <DetailCell $pad={23}>
                  <Chevron dir="right" />
                </DetailCell>
                <DetailCell $end $bold>
                  Render Settings:
                </DetailCell>
                <DetailCell $pad={8}>
                  <MiniButton aria-label="Render settings presets">
                    <Chevron />
                  </MiniButton>
                </DetailCell>
                <DetailCell $pad={1}>
                  <Link href="#settings">Best Settings</Link>
                </DetailCell>
                <DetailCell $end $bold>
                  Log:
                </DetailCell>
                <DetailCell $pad={6}>
                  <Select label="Log" value="Errors Only" width={173} height={18} />
                </DetailCell>
              </Detail>
            </QueueTd>
          </tr>
          <tr>
            <QueueTd colSpan={10} $pad={1} $alt>
              <Detail>
                <DetailCell $pad={23}>
                  <Chevron dir="right" />
                </DetailCell>
                <DetailCell $end $bold>
                  Output Module:
                </DetailCell>
                <DetailCell $pad={8}>
                  <MiniButton aria-label="Output module presets">
                    <Chevron />
                  </MiniButton>
                </DetailCell>
                <DetailCell $pad={1}>
                  <Link href="#module">Lossless</Link>
                </DetailCell>
                <DetailCell $end $bold>
                  <MiniButton $w={19} aria-label="Add output module">
                    <Icon w={12}>
                      <path d="M0 6h12M6 0v12" stroke="#c4c4c4" strokeWidth="2.400" />
                    </Icon>
                  </MiniButton>
                  <MiniButton $w={18} disabled aria-label="Remove output module">
                    <Icon w={12}>
                      <path d="M0 6h12" stroke="#444" strokeWidth="2" />
                    </Icon>
                  </MiniButton>
                  Output To:
                </DetailCell>
                <DetailCell $pad={6}>
                  <MiniButton aria-label="Output file presets">
                    <Chevron />
                  </MiniButton>
                  <Link href="#output" $italic>
                    Not yet specified
                  </Link>
                </DetailCell>
              </Detail>
            </QueueTd>
          </tr>
        </tbody>
      </QueueTable>
    </QueueList>
    <QueueFooter />
  </Queue>
);

const Apps = () => (
  <>
    <TaskButton aria-label="Task view">
      <Icon w={20} h={20}>
        <path d="M1 1v3h12V1M1 19v-3h12v3M1 6.500h12v7H1zM18.500 1v4M18.500 10v9" stroke="#fff" strokeWidth="1.300" />
        <path d="M17 6h3v3h-3z" fill="#fff" />
      </Icon>
    </TaskButton>
    <TaskButton $open aria-label="Chrome">
      <Icon w={28}>
        <path d="M14 14 2 7a14 14 0 0 1 24 0z" fill="#db4437" />
        <path d="M14 14 2 7a14 14 0 0 0 11 21l7-11z" fill="#0f9d58" />
        <path d="m18 16-5 12A14 14 0 0 0 26 7H14z" fill="#ffcd40" />
        <circle cx="14" cy="14" r="6.400" fill="#f1f1f1" />
        <circle cx="14" cy="14" r="5" fill="#4285f4" />
      </Icon>
    </TaskButton>
    <TaskButton aria-label="Photoshop">
      <AdobeIcon bg="#06242e" fg="#20b4e8" text="Ps" />
    </TaskButton>
    <TaskButton $open aria-label="Illustrator">
      <AdobeIcon bg="#261300" fg="#f28411" text="Ai" />
    </TaskButton>
    <TaskButton aria-label="InDesign">
      <AdobeIcon bg="#2e0516" fg="#e23b78" text="Id" />
    </TaskButton>
    <TaskButton aria-label="XD">
      <AdobeIcon bg="#2e001e" fg="#ee35b5" text="Xd" round={6} />
    </TaskButton>
    <TaskButton $active aria-label="After Effects">
      <AdobeIcon bg="#1f0740" fg="#c08cf5" text="Ae" />
    </TaskButton>
    <TaskButton aria-label="File Explorer">
      <Icon w={28} h={26}>
        <path d="M0 1h12v3h16v19H0z" fill="#fbdc80" />
        <path d="M1 1h10v3H1z" fill="#f2b72c" />
        <path d="M5 25V15h18v10h-5v-5h-8v5z" fill="#3aa6d8" />
      </Icon>
    </TaskButton>
    <TaskButton aria-label="Mail">
      <Icon w={30} h={26}>
        <path d="M0 9 15 1l15 8v16H0z" fill="#fff" />
        <path d="M1 9h28L19 15l5 7L1 10z" fill="#111" />
      </Icon>
    </TaskButton>
    <TaskButton $open aria-label="Word">
      <Icon w={30} h={28}>
        <path d="M7 0h22v7H7z" fill="#41a5ee" />
        <path d="M7 7h22v7H7z" fill="#2b7cd3" />
        <path d="M7 14h22v7H7z" fill="#185abd" />
        <path d="M7 21h22v7H7z" fill="#103f91" />
        <rect y="6" width="16" height="16" rx="1" fill="#185abd" />
        <text x="8" y="18" textAnchor="middle" fontSize="11" fontWeight="700" fill="#fff">
          W
        </text>
      </Icon>
    </TaskButton>
    <TaskButton $open aria-label="Spotify">
      <Icon w={28}>
        <circle cx="14" cy="14" r="14" fill="#1ed760" />
        <path d="M5 9c6-2 13-1 18 2M6 14c5-1.500 10-1 15 2M7 19c4-1 8-1 12 1" stroke="#10191a" strokeWidth="2.400" strokeLinecap="round" />
      </Icon>
    </TaskButton>
    <TaskButton $open aria-label="Resource Monitor">
      <Icon w={28} h={28}>
        <path d="m1 9 8-6v18l-8-2z" fill="#a4a8ac" />
        <path d="m8 3 19 2-3 16-17-2z" fill="#c8ccd0" />
        <path d="m10 5 15 2-3 12-13-2z" fill="#eef4fa" />
        <path d="m10 14 2-1 3-5 2 7 3-4 2 4" stroke="#3a94dc" />
        <ellipse cx="17" cy="24" rx="7" ry="3.500" fill="#d4d6d8" />
      </Icon>
    </TaskButton>
    <TaskButton $open aria-label="Media Encoder">
      <Icon w={28}>
        <path d="M1 1h26v26H1z" fill="#12004a" stroke="#8a78e8" strokeWidth="2" />
        <path d="M5 5v18h17z" fill="#9c8cff" />
        <path d="m8 6 14 15M12 6l10 11M16 6l6 7" stroke="#9c8cff" strokeWidth="2" strokeDasharray="2 2" />
      </Icon>
    </TaskButton>
  </>
);

const Bottom = () => (
  <Taskbar>
    <Start aria-label="Start">
      <Icon w={20}>
        <path d="m0 3 8-1v7.500H0zM9 2l11-2v9.500H9zM0 10.500h8V18l-8-1zM9 10.500h11V20L9 18z" fill="#fff" />
      </Icon>
    </Start>
    <TaskSearch>
      <Icon w={28}>
        <circle cx="14" cy="14" r="11.500" stroke="#111" strokeWidth="3.500" />
      </Icon>
      <TextInput placeholder="Type here to search" aria-label="Type here to search" />
      <Icon w={15} h={20}>
        <rect x="4" y="1" width="7" height="13" rx="1" stroke="#222" strokeWidth="1.500" />
        <path d="M1 9v4c0 3 2 4 6.500 4S14 16 14 13V9M7.500 17v3M4 19.500h7" stroke="#222" strokeWidth="1.300" />
      </Icon>
    </TaskSearch>
    <Apps />
    <Tray>
      <TrayButton $w={60} aria-label="People">
        <Icon w={20}>
          <g stroke="#fff" strokeWidth="1.500">
            <circle cx="14" cy="4" r="3" />
            <circle cx="6" cy="9" r="3" />
            <path d="M1 19c0-9 10-9 10 0M10 10c3-4 9-3 9 3" />
          </g>
        </Icon>
      </TrayButton>
      <TrayButton aria-label="Show hidden icons">
        <Icon w={16} h={10}>
          <path d="m1 9 7-7 7 7" stroke="#fff" strokeWidth="1.400" />
        </Icon>
      </TrayButton>
      <TrayButton aria-label="Battery">
        <Icon w={20} h={14}>
          <path d="M6 3h12v10H4V8" stroke="#fff" strokeWidth="1.400" />
          <path d="M7 5h5v6H7zM18 6h2v4h-2zM1 2h5v4H1zM2 0h1v3H2zM4 0h1v3H4z" fill="#fff" />
        </Icon>
      </TrayButton>
      <TrayButton aria-label="Wi-Fi">
        <Icon w={16}>
          <path d="M1 16C1 8 7 1 15 1M5 16C5 10 9 5 15 5M9 16c0-4 3-7 6-7" stroke="#ccc" strokeWidth="1.200" />
          <circle cx="14" cy="14" r="2" fill="#fff" />
        </Icon>
      </TrayButton>
      <TrayButton aria-label="Volume">
        <Icon w={20} h={16}>
          <path d="M1 5h3l4-4v14l-4-4H1z" stroke="#fff" strokeWidth="1.300" />
          <path d="M11 5c1 2 1 4 0 6M14 3c2 3 2 7 0 10" stroke="#fff" strokeWidth="1.200" />
          <path d="M17 1c3 4 3 10 0 14" stroke="#666" strokeWidth="1.200" />
        </Icon>
      </TrayButton>
      <Clock>
        11:17 PM
        <br />
        7/3/2019
      </Clock>
      <Notify aria-label="Notifications">
        <Icon w={20} h={19}>
          <path d="M0 0h20v15h-6l-4 4v-4H0z" fill="#fff" />
          <path d="M4 4h12M4 7.500h12M4 11h8" stroke="#222" strokeWidth="1.300" />
        </Icon>
        <Badge>3</Badge>
      </Notify>
    </Tray>
    <ShowDesktop aria-label="Show desktop" />
  </Taskbar>
);

const App = () => (
  <Page>
    <GlobalStyle />
    <Desktop>
      <Window>
        <TopBars />
        <Tools />
        <Workspace>
          <Project />
          <Composition />
          <SidePanels />
        </Workspace>
        <RenderQueue />
      </Window>
    </Desktop>
    <Bottom />
  </Page>
);

export default App;
